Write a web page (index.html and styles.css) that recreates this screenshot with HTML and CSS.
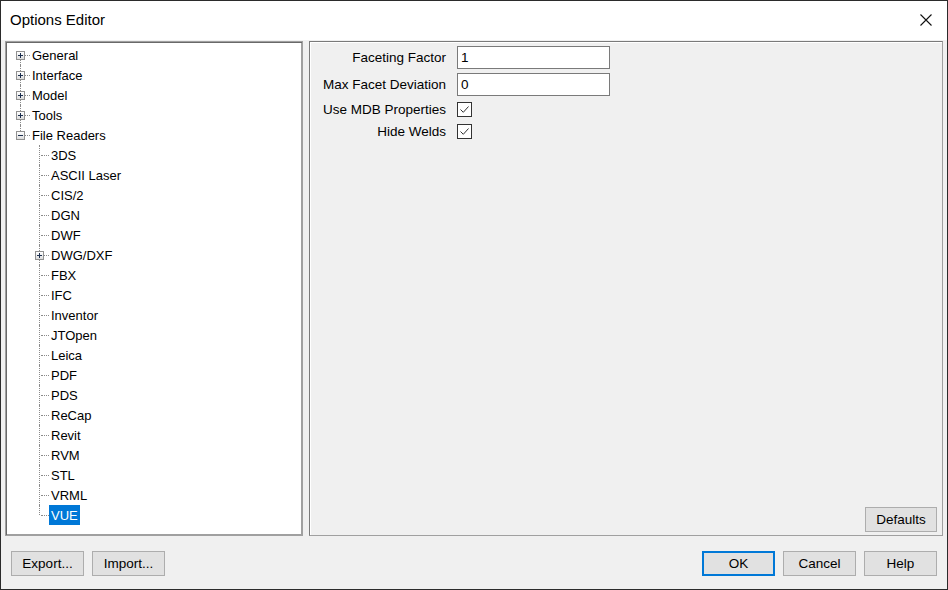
FILE: index.html
```html
<!DOCTYPE html>
<html>
<head>
<meta charset="utf-8">
<title>Options Editor</title>
<link rel="stylesheet" href="styles.css">
</head>
<body>
<div class="window">
  <div class="titlebar">
    <span class="title">Options Editor</span>
    <svg class="close" width="12" height="12" viewBox="0 0 12 12"><path d="M0.5 0.5 L11.5 11.5 M11.5 0.5 L0.5 11.5" stroke="#111" stroke-width="1.1" fill="none"/></svg>
  </div>
  <div class="main">
    <div class="tree">
      <div class="row"><span class="cell first"><span class="box plus"></span></span><span class="label">General</span></div>
      <div class="row"><span class="cell"><span class="box plus"></span></span><span class="label">Interface</span></div>
      <div class="row"><span class="cell"><span class="box plus"></span></span><span class="label">Model</span></div>
      <div class="row"><span class="cell"><span class="box plus"></span></span><span class="label">Tools</span></div>
      <div class="row"><span class="cell last"><span class="box minus"></span></span><span class="label">File Readers</span></div>
      <div class="row"><span class="indent"></span><span class="cell"></span><span class="label">3DS</span></div>
      <div class="row"><span class="indent"></span><span class="cell"></span><span class="label">ASCII Laser</span></div>
      <div class="row"><span class="indent"></span><span class="cell"></span><span class="label">CIS/2</span></div>
      <div class="row"><span class="indent"></span><span class="cell"></span><span class="label">DGN</span></div>
      <div class="row"><span class="indent"></span><span class="cell"></span><span class="label">DWF</span></div>
      <div class="row"><span class="indent"></span><span class="cell"><span class="box plus"></span></span><span class="label">DWG/DXF</span></div>
      <div class="row"><span class="indent"></span><span class="cell"></span><span class="label">FBX</span></div>
      <div class="row"><span class="indent"></span><span class="cell"></span><span class="label">IFC</span></div>
      <div class="row"><span class="indent"></span><span class="cell"></span><span class="label">Inventor</span></div>
      <div class="row"><span class="indent"></span><span class="cell"></span><span class="label">JTOpen</span></div>
      <div class="row"><span class="indent"></span><span class="cell"></span><span class="label">Leica</span></div>
      <div class="row"><span class="indent"></span><span class="cell"></span><span class="label">PDF</span></div>
      <div class="row"><span class="indent"></span><span class="cell"></span><span class="label">PDS</span></div>
      <div class="row"><span class="indent"></span><span class="cell"></span><span class="label">ReCap</span></div>
      <div class="row"><span class="indent"></span><span class="cell"></span><span class="label">Revit</span></div>
      <div class="row"><span class="indent"></span><span class="cell"></span><span class="label">RVM</span></div>
      <div class="row"><span class="indent"></span><span class="cell"></span><span class="label">STL</span></div>
      <div class="row"><span class="indent"></span><span class="cell"></span><span class="label">VRML</span></div>
      <div class="row"><span class="indent"></span><span class="cell last"></span><span class="label selected">VUE</span></div>
    </div>
    <div class="panel">
      <div class="form">
        <label class="flabel">Faceting Factor</label>
        <div class="input">1</div>
        <label class="flabel">Max Facet Deviation</label>
        <div class="input">0</div>
        <label class="flabel">Use MDB Properties</label>
        <svg class="check" width="15" height="15" viewBox="0 0 15 15"><rect x="0.5" y="0.5" width="14" height="14" fill="#fff" stroke="#333"/><path d="M3.5 7.5 L6.3 10.3 L11.5 4.5" stroke="#333" stroke-width="1" fill="none"/></svg>
        <label class="flabel">Hide Welds</label>
        <svg class="check" width="15" height="15" viewBox="0 0 15 15"><rect x="0.5" y="0.5" width="14" height="14" fill="#fff" stroke="#333"/><path d="M3.5 7.5 L6.3 10.3 L11.5 4.5" stroke="#333" stroke-width="1" fill="none"/></svg>
      </div>
      <div class="panel-foot">
        <button class="btn defaults">Defaults</button>
      </div>
    </div>
  </div>
  <div class="footer">
    <div class="group">
      <button class="btn">Export...</button>
      <button class="btn">Import...</button>
    </div>
    <div class="group">
      <button class="btn primary">OK</button>
      <button class="btn">Cancel</button>
      <button class="btn">Help</button>
    </div>
  </div>
</div>
</body>
</html>
```

FILE: styles.css
```css
html, body {
  margin: 0;
  padding: 0;
}
body {
  font-family: "Liberation Sans", Arial, sans-serif;
  font-size: 13px;
  color: #000;
}
.window {
  width: 948px;
  height: 590px;
  box-sizing: border-box;
  border: 1px solid #2b2b2b;
  background: #f0f0f0;
  display: flex;
  flex-direction: column;
}
.titlebar {
  height: 39px;
  flex: none;
  background: #fff;
  display: flex;
  align-items: center;
  justify-content: space-between;
  padding: 0 15px 0 9px;
}
.title {
  font-size: 15px;
  margin-top: -2px;
}
.close {
  margin-top: -2px;
}
.main {
  display: flex;
  gap: 6px;
  padding: 1px 4px 0 4px;
  height: 495px;
  flex: none;
}
.tree {
  width: 298px;
  box-sizing: border-box;
  background: #fff;
  border: 1px solid #a0a0a0;
  box-shadow: inset 1px 1px 0 #696969, inset -1px -1px 0 #a0a0a0;
  padding: 3px 1px 1px 1px;
  overflow: hidden;
}
.row {
  display: flex;
  height: 20px;
  align-items: center;
}
.indent {
  width: 19px;
  height: 20px;
  flex: none;
}
.cell {
  position: relative;
  width: 23px;
  height: 20px;
  flex: none;
}
.cell::before {
  content: "";
  position: absolute;
  left: 13px;
  top: 0;
  bottom: 0;
  border-left: 1px dotted #8a8a8a;
}
.cell.first::before {
  top: 10px;
}
.cell.last::before {
  bottom: 10px;
}
.cell::after {
  content: "";
  position: absolute;
  left: 15px;
  right: 0;
  top: 10px;
  border-top: 1px dotted #8a8a8a;
}
.box {
  position: absolute;
  left: 9px;
  top: 6px;
  width: 9px;
  height: 9px;
  box-sizing: border-box;
  border: 1px solid #919191;
  z-index: 1;
}
.box.plus {
  background:
    linear-gradient(#1c2f4f, #1c2f4f) center / 5px 1px no-repeat,
    linear-gradient(#1c2f4f, #1c2f4f) center / 1px 5px no-repeat,
    linear-gradient(#ffffff, #dcdcdc);
}
.box.minus {
  background:
    linear-gradient(#1c2f4f, #1c2f4f) center / 5px 1px no-repeat,
    linear-gradient(#ffffff, #dcdcdc);
}
.label {
  padding: 0 2px;
  line-height: 20px;
  white-space: nowrap;
  position: relative;
  top: 1px;
}
.label.selected {
  background: #0078d7;
  color: #fff;
  top: 0;
  line-height: 20px;
  padding-top: 1px;
  height: 19px;
}
.panel {
  width: 634px;
  box-sizing: border-box;
  border: 1px solid #7a7a7a;
  border-right-color: #a0a0a0;
  border-bottom-color: #a0a0a0;
  box-shadow: inset 1px 1px 0 #ffffff;
  display: flex;
  flex-direction: column;
  justify-content: space-between;
}
.form {
  display: grid;
  grid-template-columns: max-content 153px;
  grid-template-rows: 23px 23px 18px 18px;
  column-gap: 11px;
  row-gap: 4px;
  align-items: center;
  padding: 4px 0 0 13px;
  font-size: 13.5px;
}
.flabel {
  justify-self: end;
  white-space: nowrap;
}
.input {
  height: 23px;
  box-sizing: border-box;
  border: 1px solid #7a7a7a;
  background: #fff;
  padding: 0 3px;
  line-height: 21px;
}
.check {
  display: block;
}
.panel-foot {
  display: flex;
  justify-content: flex-end;
  padding: 0 5px 3px 0;
}
.btn {
  font-family: "Liberation Sans", Arial, sans-serif;
  font-size: 13.5px;
  color: #000;
  width: 73px;
  height: 25px;
  box-sizing: border-box;
  background: #e1e1e1;
  border: 1px solid #adadad;
  padding: 0;
  margin: 0;
}
.btn.defaults {
  width: 72px;
}
.btn.primary {
  border: 2px solid #0078d7;
}
.footer {
  flex: 1;
  display: flex;
  justify-content: space-between;
  align-items: flex-start;
  padding: 15px 10px 0 10px;
}
.group {
  display: flex;
  gap: 8px;
}
```
